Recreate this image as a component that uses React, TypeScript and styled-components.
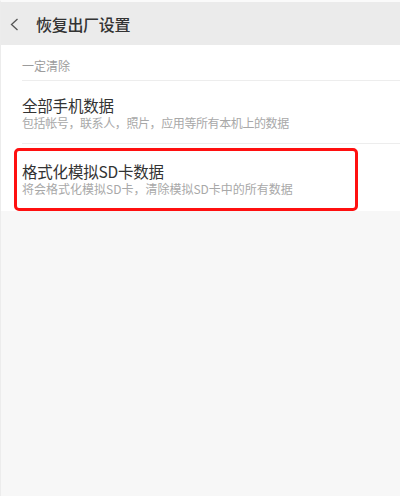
import styled, { createGlobalStyle } from 'styled-components'

const Global = createGlobalStyle`
	html, body {
		margin: 0;
		padding: 0;
		background: #f7f7f7;
	}
	body {
		font-family: "Noto Sans CJK SC", "Noto Sans", sans-serif;
	}
`

const Screen = styled.div`
	width: 400px;
	height: 496px;
	display: flex;
	flex-direction: column;
	background: #f7f7f7;
	border-top: 2px solid #fafafa;
	border-left: 1px solid #ececec;
	box-sizing: border-box;
	overflow: hidden;
`

const Header = styled.div`
	height: 43px;
	flex-shrink: 0;
	display: flex;
	align-items: center;
	background: #ebebeb;
	padding-left: 9px;
`

const Back = styled.svg`
	width: 9px;
	height: 13px;
	margin-top: 2px;
`

const HeaderTitle = styled.div`
	margin-left: 17px;
	font-size: 16px;
	line-height: 20px;
	font-weight: 500;
	color: #333;
	letter-spacing: -0.3px;
`

const List = styled.div`
	background: #fff;
	flex-shrink: 0;
`

const SectionLabel = styled.div`
	padding: 13px 0 6px 21px;
	font-size: 12px;
	line-height: 16px;
	color: #9c9c9c;
`

const Divider = styled.div`
	height: 1px;
	margin-left: 21px;
	background: #ededed;
`

const Row = styled.div`
	padding: 14px 0 12px 21px;
`

const Highlight = styled.div`
	margin: 4px 0 0 13px;
	width: 344px;
	box-sizing: border-box;
	border: 3px solid #ff1010;
	border-radius: 5px;
	padding: 10px 0 11px 5px;
`

const ItemTitle = styled.div`
	font-size: 15.5px;
	line-height: 20px;
	color: #333;
	letter-spacing: -0.2px;
`

const ItemSub = styled.div<{ $tight?: boolean }>`
	font-size: 12px;
	line-height: 16px;
	color: #a8a8a8;
	letter-spacing: ${(p) => (p.$tight ? '-0.4px' : '0')};
`

export default function App() {
	return (
		<Screen>
			<Global />
			<Header>
				<Back viewBox="0 0 9 13">
					<polyline points="7.5,1 1.5,6.5 7.5,12" fill="none" stroke="#555" strokeWidth="1.3" />
				</Back>
				<HeaderTitle>恢复出厂设置</HeaderTitle>
			</Header>
			<List>
				<SectionLabel>一定清除</SectionLabel>
				<Divider />
				<Row>
					<ItemTitle>全部手机数据</ItemTitle>
					<ItemSub $tight>包括帐号，联系人，照片，应用等所有本机上的数据</ItemSub>
				</Row>
				<Divider />
				<Highlight>
					<ItemTitle>格式化模拟SD卡数据</ItemTitle>
					<ItemSub>将会格式化模拟SD卡，清除模拟SD卡中的所有数据</ItemSub>
				</Highlight>
			</List>
		</Screen>
	)
}
